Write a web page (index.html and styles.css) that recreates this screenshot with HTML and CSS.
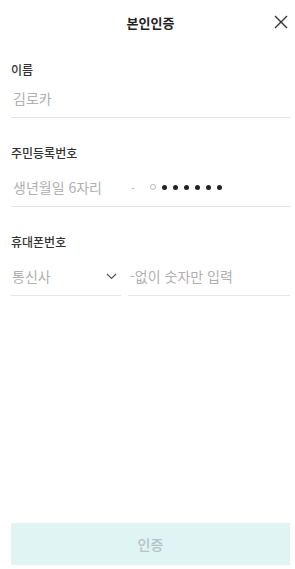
FILE: index.html
```html
<!DOCTYPE html>
<html lang="ko">
<head>
    <meta charset="UTF-8">
    <meta name="viewport" content="width=device-width, initial-scale=1.0">
    <title>본인인증</title>
    <link rel="stylesheet" href="styles.css">
</head>
<body>
    <div class="page">
        <header class="header">
            <h1 class="title">본인인증</h1>
            <button type="button" class="close-button" aria-label="닫기">
                <svg width="14" height="14" viewBox="0 0 14 14">
                    <path d="M1 1 L13 13 M13 1 L1 13" stroke="#333" stroke-width="1.4" fill="none"/>
                </svg>
            </button>
        </header>

        <form class="form">
            <div class="form-group first">
                <label class="label" for="name">이름</label>
                <div class="field">
                    <input type="text" id="name" placeholder="김로카">
                </div>
            </div>

            <div class="form-group">
                <label class="label" for="birth">주민등록번호</label>
                <div class="field">
                    <input type="text" id="birth" class="birth" placeholder="생년월일 6자리">
                    <span class="dash">-</span>
                    <span class="digit empty"></span>
                    <span class="digit"></span>
                    <span class="digit"></span>
                    <span class="digit"></span>
                    <span class="digit"></span>
                    <span class="digit"></span>
                    <span class="digit"></span>
                </div>
            </div>

            <div class="form-group">
                <label class="label" for="phone">휴대폰번호</label>
                <div class="phone-row">
                    <div class="field carrier">
                        <span class="placeholder">통신사</span>
                        <svg class="chevron" width="11" height="7" viewBox="0 0 11 7">
                            <path d="M1 1 L5.5 5.5 L10 1" stroke="#555" stroke-width="1.2" fill="none"/>
                        </svg>
                    </div>
                    <div class="field number">
                        <input type="tel" id="phone" placeholder="-없이 숫자만 입력">
                    </div>
                </div>
            </div>
        </form>

        <button type="button" class="submit-button">인증</button>
    </div>
</body>
</html>
```

FILE: styles.css
```css
* {
    box-sizing: border-box;
}

body {
    font-family: "Noto Sans CJK KR", "Noto Sans", sans-serif;
    background-color: #fff;
    margin: 0;
    padding: 0;
}

.page {
    height: 569px;
    padding: 0 5px 4px 11px;
    display: flex;
    flex-direction: column;
}

.header {
    height: 44px;
    display: flex;
    align-items: center;
    justify-content: center;
    position: relative;
}

.title {
    margin: 0;
    font-size: 13px;
    font-weight: 700;
    color: #222;
}

.close-button {
    position: absolute;
    right: 2px;
    top: 15px;
    width: 14px;
    height: 14px;
    padding: 0;
    border: none;
    background: none;
    display: flex;
}

.form {
    margin-top: 18px;
}

.form-group {
    margin-bottom: 27px;
}

.label {
    display: block;
    height: 16px;
    line-height: 16px;
    font-size: 12px;
    font-weight: 500;
    color: #333;
    margin-bottom: 7px;
}

.form-group.first .label {
    margin-bottom: 1px;
}

.field {
    height: 39px;
    border-bottom: 1px solid #e4e4e4;
    display: flex;
    align-items: center;
}

.field input {
    border: none;
    outline: none;
    padding: 0 1px;
    font-family: inherit;
    font-size: 14px;
    color: #333;
    width: 100%;
    background: none;
}

.field input::placeholder,
.placeholder {
    color: #b0b0b0;
    font-size: 14px;
    padding-left: 1px;
}

.field input.birth {
    width: 120px;
    flex: none;
}

.dash {
    color: #c4c4c4;
    font-size: 12px;
    margin-right: 15px;
}

.digit {
    width: 5px;
    height: 5px;
    border-radius: 50%;
    background-color: #222;
    margin-right: 6px;
}

.digit.empty {
    width: 6px;
    height: 6px;
    background: none;
    border: 1px solid #bbb;
    margin-right: 6px;
}

.phone-row {
    display: flex;
    gap: 7px;
}

.carrier {
    width: 110px;
    justify-content: space-between;
    padding-right: 4px;
}

.chevron {
    margin-top: 1px;
}

.number {
    flex: 1;
}

.submit-button {
    margin-top: auto;
    height: 42px;
    width: 100%;
    border: none;
    background-color: #e0f4f3;
    color: #b3c2c2;
    font-family: inherit;
    font-size: 14px;
    font-weight: 500;
}
```
